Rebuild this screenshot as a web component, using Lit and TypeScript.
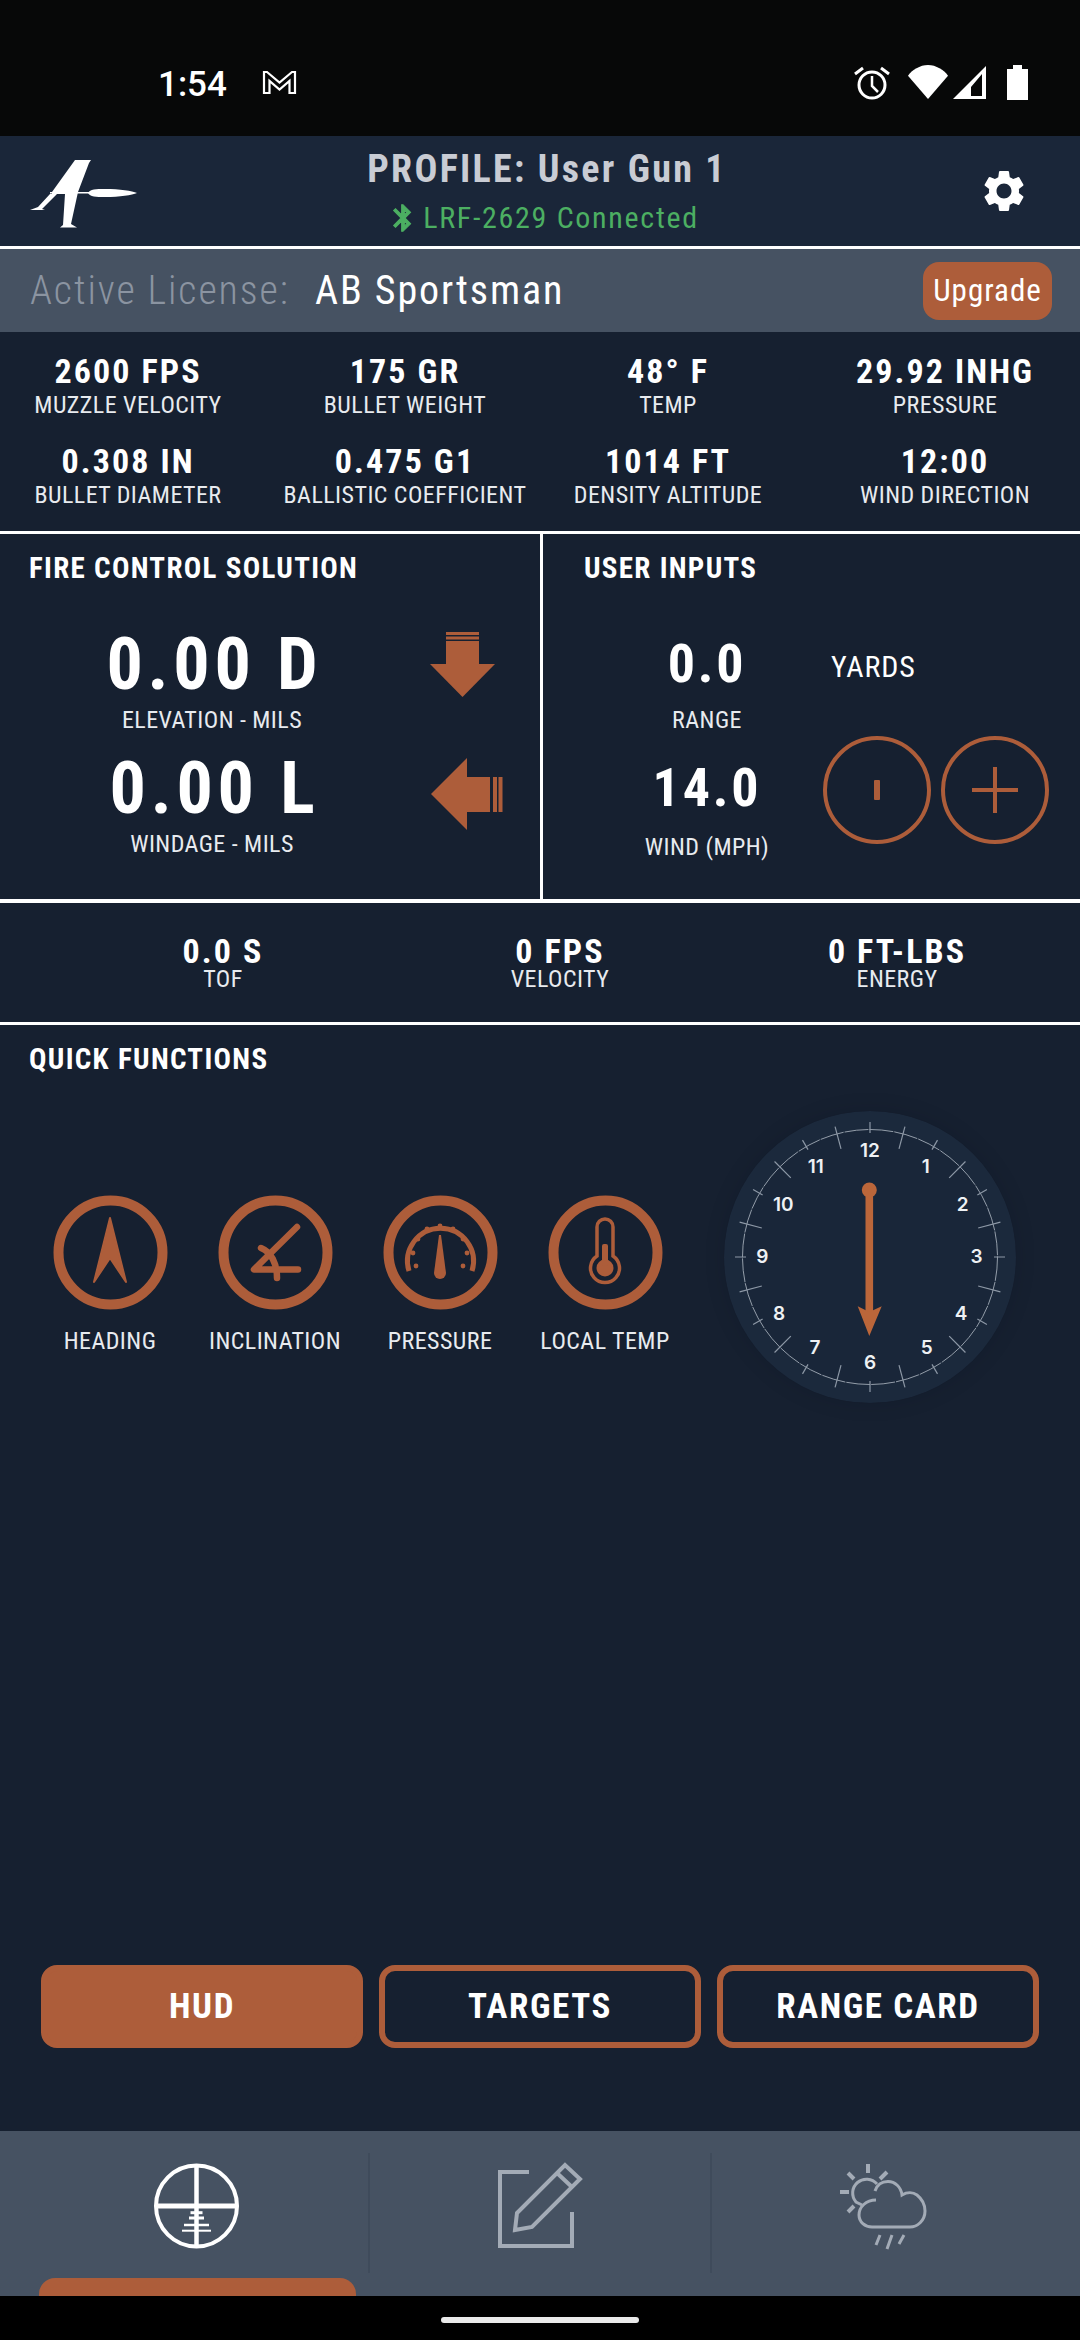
import { LitElement, html, css, svg } from "lit";
import { customElement } from "lit/decorators.js";

const CLOCK_LABELS: [string, number, number][] = [
  ["12", 510, 180], ["1", 677, 228], ["2", 788, 342], ["3", 830, 498],
  ["4", 783, 667], ["5", 680, 770], ["6", 510, 815], ["7", 345, 770],
  ["8", 237, 667], ["9", 187, 497], ["10", 250, 342], ["11", 347, 228],
];

const TOP_STATS = [
  ["2600 FPS", "MUZZLE VELOCITY"], ["175 GR", "BULLET WEIGHT"], ["48° F", "TEMP"], ["29.92 INHG", "PRESSURE"],
  ["0.308 IN", "BULLET DIAMETER"], ["0.475 G1", "BALLISTIC COEFFICIENT"], ["1014 FT", "DENSITY ALTITUDE"], ["12:00", "WIND DIRECTION"],
];

const SHOT_STATS = [["0.0 S", "TOF"], ["0 FPS", "VELOCITY"], ["0 FT-LBS", "ENERGY"]];

const gaugeTicks = [
  [30, 58], [35, 44], [44, 34], [57, 31], [70, 34], [80, 44], [84, 58], [33, 71], [80, 71],
];

function clockFace() {
  const ticks = [];
  for (let i = 0; i < 24; i++) {
    const a = (i * 15 * Math.PI) / 180;
    const inner = i % 2 === 0 ? 124 : 112;
    ticks.push(svg`<line x1=${146 + inner * Math.sin(a)} y1=${146 - inner * Math.cos(a)}
      x2=${146 + 135 * Math.sin(a)} y2=${146 - 135 * Math.cos(a)} />`);
  }
  return svg`
    <circle cx="146" cy="146" r="146" fill="#1b293c" />
    <circle cx="146" cy="146" r="127.5" fill="#192639" stroke="#b4bcc6" stroke-width="0.8" stroke-dasharray="24 1" />
    <g stroke="#8d98a6" stroke-width="1.2">${ticks}</g>
    <g class="num">
      ${CLOCK_LABELS.map(([t, x, y]) => svg`<text x=${146 + (x - 510) / 3} y=${146 + (y - 500) / 3 + 7} text-anchor="middle">${t}</text>`)}
    </g>
    <g fill="#bb663a">
      <circle cx="145.3" cy="79" r="7.5" />
      <rect x="141.5" y="79" width="7.6" height="122" />
      <path d="M133.7 195.3L145.3 201L157.7 195.3L145.3 225Z" />
    </g>`;
}

@customElement("app-root")
export class AppRoot extends LitElement {
  static styles = css`
    :host {
      display: flex;
      flex-direction: column;
      width: 1080px;
      height: 2340px;
      background: #162030;
      color: #fff;
      font-family: "Roboto Condensed", "Roboto", sans-serif;
      overflow: hidden;
    }
    .status {
      height: 136px;
      background: #070808;
      display: flex;
      align-items: flex-start;
      flex: none;
    }
    .time {
      font: 500 35px/40px "Roboto", sans-serif;
      margin: 65px 0 0 158px;
    }
    .gmail { margin: 70px 0 0 35px; }
    .sys { margin: 55px 40px 0 auto; }
    .header {
      height: 110px;
      flex: none;
      background: #1a2639;
      display: grid;
      grid-template-columns: 314px 466px 1fr;
      align-items: center;
      border-bottom: 3px solid #fff;
    }
    .logo { margin-left: 20px; margin-top: 3px; }
    .title { text-align: center; }
    .title h1 {
      margin: 0;
      font: 700 38px/40px "Roboto Condensed", sans-serif;
      letter-spacing: 2.3px;
      color: #c9ccd4;
      height: 40px;
    }
    .conn {
      display: flex;
      justify-content: center;
      align-items: center;
      gap: 4px;
      margin-top: 13px;
      font-size: 30px;
      line-height: 30px;
      letter-spacing: 1.7px;
      color: #4caf62;
    }
    .conn svg { margin-left: -8px; }
    .gear { justify-self: end; margin-right: 51px; }
    .license {
      height: 83px;
      flex: none;
      background: #465262;
      display: flex;
      align-items: center;
      padding: 0 28px 0 30px;
      font-size: 40px;
      font-weight: 400;
      letter-spacing: 1.9px;
    }
    .license .lbl { color: #8b94a1; width: 285px; font-weight: 300; }
    .upgrade {
      margin-left: auto;
      width: 129px;
      height: 58px;
      border-radius: 16px;
      background: #ad5d3a;
      font-size: 31px;
      font-weight: 400;
      letter-spacing: 1px;
      line-height: 58px;
      text-align: center;
    }
    .stats {
      flex: none;
      box-sizing: border-box;
      padding-top: 22px;
      display: grid;
      grid-template-columns: 256px 298px 228px 298px;
      grid-auto-rows: 68px;
      row-gap: 22px;
      border-bottom: 3px solid #fff;
      height: 202px;
    }
    .stat { text-align: center; white-space: nowrap; }
    .stats .stat:nth-child(4n) { padding-left: 28px; }
    .val {
      font-size: 34px;
      font-weight: 700;
      line-height: 34px;
      letter-spacing: 2.1px;
    }
    .lab {
      font-size: 24px;
      line-height: 34px;
      letter-spacing: 0.45px;
      color: #e8ebef;
    }
    .solution {
      height: 365px;
      flex: none;
      display: grid;
      grid-template-columns: 543px 1fr;
      border-bottom: 4px solid #fff;
    }
    .panel { padding-top: 17px; }
    .panel.left { border-right: 3px solid #fff; }
    h2 {
      margin: 0;
      font-size: 29px;
      font-weight: 700;
      line-height: 34px;
      letter-spacing: 1.3px;
      height: 34px;
    }
    .left h2, .quick h2 { padding-left: 29px; }
    .right h2 { padding-left: 41px; }
    .rows { margin-top: 43px; display: flex; flex-direction: column; gap: 17px; }
    .row { display: flex; height: 107px; align-items: flex-start; }
    .read { width: 424px; text-align: center; }
    .big { font-size: 72px; font-weight: 700; line-height: 74px; letter-spacing: 4.8px; padding-left: 5px; }
    .read .lab { line-height: 30px; margin-top: 3px; }
    .input .lab { line-height: 30px; margin-top: 5px; }
    .input .lab.wind { margin-top: 8px; }
    .arrow-d { margin: 4px 0 0 6px; }
    .arrow-l { margin: 6px 0 0 7px; }
    .input { width: 232px; margin-left: 48px; text-align: center; white-space: nowrap; }
    .mid { font-size: 54px; font-weight: 700; line-height: 72px; letter-spacing: 2.8px; }
    .yards { font-size: 30px; line-height: 30px; margin: 24px 0 0 8px; letter-spacing: .9px; }
    .stepper { display: flex; gap: 10px; margin-top: -16px; }
    .round {
      width: 108px;
      height: 108px;
      box-sizing: border-box;
      border: 4px solid #ad5d3a;
      border-radius: 50%;
      display: flex;
      align-items: center;
      justify-content: center;
    }
    .shots {
      flex: none;
      box-sizing: border-box;
      padding: 31px 0 0 54.5px;
      display: grid;
      grid-template-columns: repeat(3, 337px);
      border-bottom: 3px solid #fff;
      height: 122px;
    }
    .shots .lab { line-height: 22px; }
    .quick { flex: 1; padding-top: 17px; }
    .qrow { display: flex; align-items: flex-start; margin-top: 35px; padding-left: 27.5px; }
    .func { width: 165px; margin-top: 84px; text-align: center; }
    .func .lab { margin-top: 16px; line-height: 30px; white-space: nowrap; }
    .func svg { display: block; margin: 0 auto; }
    .clock {
      margin-left: 36.5px;
      display: block;
      border-radius: 50%;
      box-shadow: 0 0 20px rgba(10, 16, 28, 0.15);
    }
    .num text {
      font: 600 19px "Inter", sans-serif;
      fill: #eef1f4;
    }
    .buttons {
      flex: none;
      display: grid;
      grid-template-columns: repeat(3, 322px);
      gap: 16px;
      padding: 0 41px;
      margin-bottom: 83px;
    }
    .btn {
      height: 83px;
      box-sizing: border-box;
      border: 6px solid #ad5d3a;
      border-radius: 16px;
      font-size: 35px;
      font-weight: 700;
      letter-spacing: 1.6px;
      line-height: 71px;
      text-align: center;
    }
    .btn.on { background: #ad5d3a; }
    .tabs {
      height: 165px;
      flex: none;
      box-sizing: border-box;
      padding-top: 22px;
      background: #465262;
      overflow: hidden;
    }
    .tabrow { display: grid; grid-template-columns: 370px 342px 1fr; height: 120px; }
    .tab { display: flex; justify-content: center; align-items: flex-start; }
    .tab:nth-child(1) { padding-left: 30px; border-right: 2px solid #3f4b5b; }
    .tab:nth-child(2) { border-right: 2px solid #3f4b5b; }
    .tab:nth-child(3) { padding-right: 32px; }
    .tab svg { margin-top: 2px; }
    .tab .scope { margin-top: -3px; }
    .indicator {
      width: 317px;
      height: 18px;
      margin: 5px 0 0 39px;
      border-radius: 16px 16px 0 0;
      background: #ad5d3a;
    }
    .nav { height: 44px; flex: none; background: #000; padding-top: 21px; box-sizing: border-box; }
    .nav div { width: 198px; height: 6px; margin: 0 auto; border-radius: 3px; background: #e9e9e9; }
  `;

  private stat(v: string, l: string) {
    return html`<div class="stat"><div class="val">${v}</div><div class="lab">${l}</div></div>`;
  }

  render() {
    return html`
      <div class="status">
        <div class="time">1:54</div>
        <svg class="gmail" width="35" height="25" viewBox="0 0 35 25" fill="none" stroke="#fff" stroke-width="2.2">
          <path d="M2 23V2h3l12.500 10.500L30 2h3v21h-5.500V11l-10 8.500L7.500 11v12z" />
        </svg>
        <svg class="sys" width="200" height="55" viewBox="0 0 200 55" fill="#fff">
          <circle cx="32" cy="30" r="13" fill="none" stroke="#fff" stroke-width="3" />
          <path d="M32 21v10l6 6" fill="none" stroke="#fff" stroke-width="2.500" />
          <path d="M15 19l8-6M49 19l-8-6" fill="none" stroke="#fff" stroke-width="3" />
          <path d="M68 20.700C72 15 80 10 88 10C96 10 104 15 108 20.700L88 44Z" />
          <path fill-rule="evenodd" d="M113 44H146V11ZM131 41H142V19L131 32Z" />
          <path d="M173 10h9v4h6v31h-21v-31h6z" />
        </svg>
      </div>

      <div class="header">
        <svg class="logo" width="130" height="85" viewBox="0 0 130 85" fill="#fff">
          <path d="M55 10H71L69 13L58 42L51 74L57 77.500H40L43 75L45 44H32V42Z" />
          <path d="M30 44H37L22 59L25 60H10L14 58.500L18 57Z" />
          <rect x="30" y="42" width="39" height="1.500" />
          <path d="M68 43C70 39 76 39 85 39C100 39 112 41 117 43C112 45 100 47 85 47C76 47 70 47 68 43Z" />
        </svg>
        <div class="title">
          <h1>PROFILE: User Gun 1</h1>
          <div class="conn">
            <svg width="32" height="32" viewBox="0 0 24 24" fill="#4caf62" stroke="#4caf62" stroke-width="0.8">
              <path d="M17.710 7.710L12 2h-1v7.590L6.410 5 5 6.410 10.590 12 5 17.590 6.410 19 11 14.410V22h1l5.710-5.710-4.300-4.290 4.300-4.290zM13 5.830l1.880 1.880L13 9.590V5.830zm1.880 10.460L13 18.170v-3.760l1.880 1.880z" />
            </svg>
            <span>LRF-2629 Connected</span>
          </div>
        </div>
        <svg class="gear" width="50" height="50" viewBox="0 0 24 24" fill="#fff">
          <path d="M19.140 12.940c.04-.3.06-.61.06-.94 0-.32-.02-.64-.07-.94l2.030-1.580c.18-.14.23-.41.12-.61l-1.920-3.320c-.12-.22-.37-.29-.59-.22l-2.390.96c-.5-.38-1.030-.7-1.620-.94l-.36-2.540c-.04-.24-.24-.41-.48-.41h-3.840c-.24 0-.43.17-.47.41l-.36 2.540c-.59.24-1.130.57-1.620.94l-2.390-.96c-.22-.08-.47 0-.59.22L2.740 8.870c-.12.21-.08.47.12.61l2.030 1.580c-.05.3-.09.63-.09.94s.02.64.07.94l-2.030 1.580c-.18.14-.23.41-.12.61l1.920 3.320c.12.22.37.29.59.22l2.390-.96c.5.38 1.030.7 1.620.94l.36 2.540c.05.24.24.41.48.41h3.840c.24 0 .44-.17.47-.41l.36-2.540c.59-.24 1.130-.56 1.620-.94l2.390.96c.22.08.47 0 .59-.22l1.920-3.320c.12-.22.07-.47-.12-.61l-2.010-1.580zM12 15.600c-1.980 0-3.600-1.620-3.600-3.600s1.620-3.600 3.600-3.600 3.600 1.620 3.600 3.600-1.620 3.600-3.600 3.600z" />
        </svg>
      </div>

      <div class="license">
        <span class="lbl">Active License:</span>
        <span>AB Sportsman</span>
        <div class="upgrade">Upgrade</div>
      </div>

      <div class="stats">${TOP_STATS.map(([v, l]) => this.stat(v, l))}</div>

      <div class="solution">
        <div class="panel left">
          <h2>FIRE CONTROL SOLUTION</h2>
          <div class="rows">
            <div class="row">
              <div class="read"><div class="big">0.00 D</div><div class="lab">ELEVATION - MILS</div></div>
              <svg class="arrow-d" width="65" height="65" viewBox="0 0 65 65" fill="#ad5d3a">
                <rect x="16" y="0" width="33" height="3" />
                <rect x="16" y="4.500" width="33" height="3" />
                <rect x="16" y="9" width="33" height="24" />
                <path d="M0 32H65L32.500 65Z" />
              </svg>
            </div>
            <div class="row">
              <div class="read"><div class="big">0.00 L</div><div class="lab">WINDAGE - MILS</div></div>
              <svg class="arrow-l" width="72" height="72" viewBox="0 0 72 72" fill="#ad5d3a">
                <path d="M0 36L36 0V72Z" />
                <rect x="35" y="19" width="24" height="35" />
                <rect x="62" y="19" width="4" height="35" />
                <rect x="67.500" y="19" width="4" height="35" />
              </svg>
            </div>
          </div>
        </div>
        <div class="panel right">
          <h2>USER INPUTS</h2>
          <div class="rows">
            <div class="row">
              <div class="input"><div class="mid">0.0</div><div class="lab">RANGE</div></div>
              <div class="yards">YARDS</div>
            </div>
            <div class="row">
              <div class="input"><div class="mid">14.0</div><div class="lab wind">WIND (MPH)</div></div>
              <div class="stepper">
                <div class="round">
                  <svg width="8" height="20"><rect x="1" y="0" width="6" height="20" rx="1" fill="#ad5d3a" /></svg>
                </div>
                <div class="round">
                  <svg width="46" height="46" fill="#ad5d3a"><rect x="0" y="21" width="46" height="4" /><rect x="21" y="0" width="4" height="46" /></svg>
                </div>
              </div>
            </div>
          </div>
        </div>
      </div>

      <div class="shots">${SHOT_STATS.map(([v, l]) => this.stat(v, l))}</div>

      <div class="quick">
        <h2>QUICK FUNCTIONS</h2>
        <div class="qrow">
          <div class="func">
            <svg width="115" height="115" viewBox="0 0 115 115">
              <circle cx="57.500" cy="57.500" r="52" fill="none" stroke="#ad5d3a" stroke-width="10" />
              <path d="M57 23L73 87L57 63L41 87Z" fill="#ad5d3a" stroke="#ad5d3a" stroke-width="2" stroke-linejoin="round" />
            </svg>
            <div class="lab">HEADING</div>
          </div>
          <div class="func">
            <svg width="115" height="115" viewBox="0 0 115 115">
              <circle cx="57.500" cy="57.500" r="52" fill="none" stroke="#ad5d3a" stroke-width="10" />
              <path d="M79 32L36 74.500H80M43 53C53 57 59 68 59 83" fill="none" stroke="#ad5d3a" stroke-width="6.500" stroke-linecap="round" stroke-linejoin="round" />
            </svg>
            <div class="lab">INCLINATION</div>
          </div>
          <div class="func">
            <svg width="115" height="115" viewBox="0 0 115 115">
              <circle cx="57.500" cy="57.500" r="52" fill="none" stroke="#ad5d3a" stroke-width="10" />
              <path d="M26 76A33 33 0 1 1 89 76" fill="none" stroke="#ad5d3a" stroke-width="5" />
              <g fill="#ad5d3a">
                ${gaugeTicks.map(([x, y]) => svg`<circle cx=${x} cy=${y} r="2.4" />`)}
                <path d="M56 40H58L63 78A6 6 0 1 1 51 78Z" />
              </g>
            </svg>
            <div class="lab">PRESSURE</div>
          </div>
          <div class="func">
            <svg width="115" height="115" viewBox="0 0 115 115">
              <circle cx="57.500" cy="57.500" r="52" fill="none" stroke="#ad5d3a" stroke-width="10" />
              <path d="M49 61V32a8 8 0 0 1 16 0V61a14.500 14.500 0 1 1-16 0Z" fill="none" stroke="#ad5d3a" stroke-width="3.500" />
              <circle cx="57" cy="73" r="8.500" fill="#ad5d3a" />
              <rect x="54" y="49" width="6" height="22" rx="2" fill="#ad5d3a" />
            </svg>
            <div class="lab">LOCAL TEMP</div>
          </div>
          <svg class="clock" width="292" height="292" viewBox="0 0 292 292">${clockFace()}</svg>
        </div>
      </div>

      <div class="buttons">
        <div class="btn on">HUD</div>
        <div class="btn">TARGETS</div>
        <div class="btn">RANGE CARD</div>
      </div>

      <div class="tabs">
        <div class="tabrow">
          <div class="tab">
            <svg class="scope" width="120" height="110" viewBox="0 0 120 110" fill="none" stroke="#fff">
              <circle cx="57.500" cy="56" r="40.500" stroke-width="4" />
              <path d="M57.500 14V98" stroke-width="4.500" />
              <path d="M16 56H99" stroke-width="5" />
              <path d="M51.500 62.700H63.500" stroke-width="3" />
              <path d="M50 68H65" stroke-width="3" />
              <path d="M45 75H70" stroke-width="2.500" />
              <path d="M43 80.700H72" stroke-width="2" />
            </svg>
          </div>
          <div class="tab">
            <svg width="100" height="100" viewBox="0 0 100 100" fill="none" stroke="#a3abb6" stroke-width="4">
              <path d="M39 17H10V91H82V57" />
              <path d="M25 75L27 58L75 10L90 24L42 72Z" />
              <path d="M67 18L83 33" />
            </svg>
          </div>
          <div class="tab">
            <svg width="100" height="100" viewBox="0 0 100 100" fill="none" stroke="#a3abb6" stroke-width="3">
              <path d="M38 9V18M18 18L24 24M10 37H19M18 57L24 51M50 24L57 17" stroke-width="4" />
              <path d="M47 29A13 13 0 0 0 26 47L32 50" />
              <path d="M45 36C47 30 52 26.500 58 26.500C65 26.500 71 32 72 40C77 37 83 37 87 40C92 44 95 50 95 56C95 66 87 72 80 72L42 72C35 72 29 67 29 60C29 52 36 45 46 45" />
              <path d="M50 80L46 90M62 80L57 94M74 80L69 89" />
            </svg>
          </div>
        </div>
        <div class="indicator"></div>
      </div>

      <div class="nav"><div></div></div>
    `;
  }
}
